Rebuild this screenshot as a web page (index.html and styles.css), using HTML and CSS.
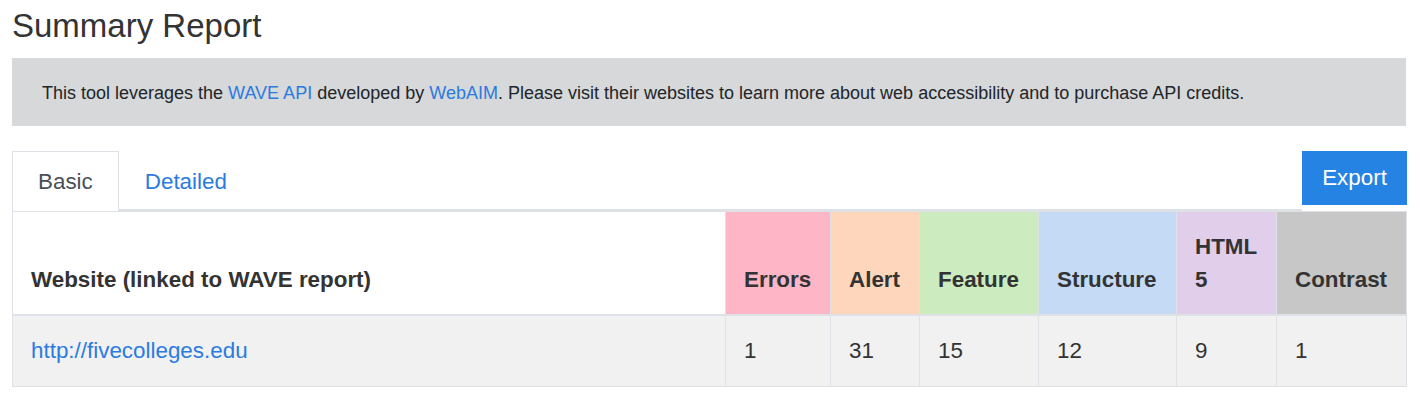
FILE: index.html
```html
<!DOCTYPE html>
<html lang="en">
<head>
<meta charset="utf-8">
<title>Summary Report</title>
<link rel="stylesheet" href="styles.css">
</head>
<body>
<main class="page">
  <h2 class="title">Summary Report</h2>
  <div class="notice">This tool leverages the <a href="#">WAVE API</a> developed by <a href="#">WebAIM</a>. Please visit their websites to learn more about web accessibility and to purchase API credits.</div>

  <div class="tabbar">
    <ul class="tabs">
      <li class="tab active">Basic</li>
      <li class="tab"><a href="#">Detailed</a></li>
    </ul>
    <div class="export-wrap"><button class="export" type="button">Export</button></div>
  </div>

  <table class="report">
    <colgroup>
      <col class="c-site">
      <col class="c-err">
      <col class="c-alert">
      <col class="c-feat">
      <col class="c-struct">
      <col class="c-html">
      <col class="c-contrast">
    </colgroup>
    <thead>
      <tr>
        <th class="h-site">Website (linked to WAVE report)</th>
        <th class="h-err">Errors</th>
        <th class="h-alert">Alert</th>
        <th class="h-feat">Feature</th>
        <th class="h-struct">Structure</th>
        <th class="h-html">HTML 5</th>
        <th class="h-contrast">Contrast</th>
      </tr>
    </thead>
    <tbody>
      <tr>
        <td><a href="#">http://fivecolleges.edu</a></td>
        <td>1</td>
        <td>31</td>
        <td>15</td>
        <td>12</td>
        <td>9</td>
        <td>1</td>
      </tr>
    </tbody>
  </table>
</main>
</body>
</html>
```

FILE: styles.css
```css
* { box-sizing: border-box; }

html, body {
  margin: 0;
  padding: 0;
  background: #fff;
}

body {
  font-family: "Liberation Sans", Arial, sans-serif;
  color: #333;
}

a {
  color: #2b7be0;
  text-decoration: none;
}

.page {
  padding: 0 16px 0 12px;
}

.title {
  margin: 6px 0 12px;
  font-size: 33px;
  line-height: 40px;
  font-weight: 400;
  color: #333;
}

.notice {
  background: #d6d8d9;
  color: #212529;
  font-size: 18px;
  line-height: 26px;
  padding: 22px 30px 20px;
  margin-bottom: 25px;
}

.tabbar {
  display: flex;
  align-items: flex-end;
  justify-content: space-between;
  border-bottom: 2px solid #dee2e6;
}

.tabs {
  display: flex;
  list-style: none;
  margin: 0 0 -2px;
  padding: 0;
}

.tab {
  font-size: 22.4px;
  line-height: 33px;
  padding: 13px 25px 13px;
  border: 1px solid transparent;
  border-bottom: 0;
}

.tab.active {
  color: #495057;
  background: #fff;
  border-color: #dee2e6;
}

.export-wrap {
  align-self: stretch;
  display: flex;
  align-items: flex-start;
  background: #fff;
  margin-bottom: -2px;
  padding-bottom: 6px;
}

.export {
  font-family: inherit;
  font-size: 22.4px;
  line-height: 33px;
  padding: 10px 20px 11px;
  border: 0;
  border-radius: 0;
  background: #2583e3;
  color: #fff;
  width: 105px;
  margin-right: -1px;
}

.report {
  width: 100%;
  table-layout: fixed;
  border-collapse: collapse;
  border: 1px solid #dee2e6;
  font-size: 22.4px;
  line-height: 33px;
}

.c-site { width: 713px; }
.c-err { width: 105px; }
.c-alert { width: 89px; }
.c-feat { width: 119px; }
.c-struct { width: 138px; }
.c-html { width: 100px; }
.c-contrast { width: 130px; }

.report th,
.report td {
  padding: 18px;
  text-align: left;
  border-left: 1px solid #dee2e6;
  overflow-wrap: normal;
}

.report th {
  vertical-align: bottom;
  font-weight: 700;
  border-bottom: 2px solid #dee2e6;
  color: #333;
}

.report td {
  vertical-align: top;
  background: #f1f1f1;
  border-bottom: 1px solid #dee2e6;
  padding-bottom: 19px;
  color: #333;
}

.h-site { background: #fff; }
.h-err { background: #feb6c6; }
.h-alert { background: #fed6bb; }
.h-feat { background: #ccebbf; }
.h-struct { background: #c4daf5; }
.h-html { background: #e1ceea; }
.h-contrast { background: #c6c7c6; }
```
